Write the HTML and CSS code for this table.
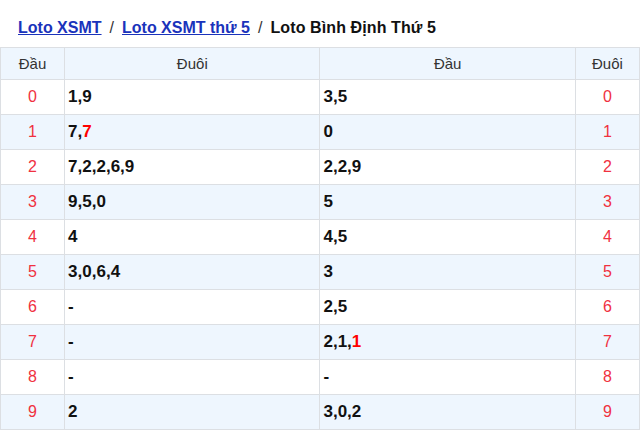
FILE: index.html
```html
<!DOCTYPE html>
<html lang="vi">
<head>
<meta charset="utf-8">
<link rel="stylesheet" href="styles.css">
</head>
<body>
<div class="crumbs">
  <a href="#">Loto XSMT</a><span class="sep">/</span><a href="#">Loto XSMT thứ 5</a><span class="sep">/</span><span class="cur">Loto Bình Định Thứ 5</span>
</div>
<table class="loto">
  <thead>
    <tr><th class="c1">Đầu</th><th class="c2">Đuôi</th><th class="c3">Đầu</th><th class="c4">Đuôi</th></tr>
  </thead>
  <tbody>
    <tr><td class="n">0</td><td class="v">1,9</td><td class="v">3,5</td><td class="n">0</td></tr>
    <tr><td class="n">1</td><td class="v">7,<span class="hl">7</span></td><td class="v">0</td><td class="n">1</td></tr>
    <tr><td class="n">2</td><td class="v">7,2,2,6,9</td><td class="v">2,2,9</td><td class="n">2</td></tr>
    <tr><td class="n">3</td><td class="v">9,5,0</td><td class="v">5</td><td class="n">3</td></tr>
    <tr><td class="n">4</td><td class="v">4</td><td class="v">4,5</td><td class="n">4</td></tr>
    <tr><td class="n">5</td><td class="v">3,0,6,4</td><td class="v">3</td><td class="n">5</td></tr>
    <tr><td class="n">6</td><td class="v">-</td><td class="v">2,5</td><td class="n">6</td></tr>
    <tr><td class="n">7</td><td class="v">-</td><td class="v">2,1,<span class="hl">1</span></td><td class="n">7</td></tr>
    <tr><td class="n">8</td><td class="v">-</td><td class="v">-</td><td class="n">8</td></tr>
    <tr><td class="n">9</td><td class="v">2</td><td class="v">3,0,2</td><td class="n">9</td></tr>
  </tbody>
</table>
</body>
</html>
```
FILE: styles.css
```css
html, body {
  margin: 0;
  padding: 0;
  background: #fff;
  font-family: "Liberation Sans", Arial, sans-serif;
}
.crumbs {
  height: 47px;
  box-sizing: border-box;
  padding: 19px 0 0 18px;
  font-size: 16px;
  font-weight: bold;
  line-height: 18px;
  color: #111;
}
.crumbs a {
  color: #1a33bb;
  text-decoration: underline;
}
.crumbs .sep {
  color: #333;
  font-weight: normal;
  margin: 0 8px 0 8px;
}
.crumbs .cur {
  letter-spacing: 0.1px;
}
.loto {
  width: 640px;
  border-collapse: collapse;
  table-layout: fixed;
}
.loto th, .loto td {
  border: 1px solid #dcdfe3;
  padding: 0 3px;
}
.loto th {
  height: 31px;
  font-weight: normal;
  font-size: 15px;
  color: #333;
  background: #eef6fe;
  text-align: center;
}
.loto .c1 { width: 57px; }
.loto .c2 { width: 248px; }
.loto .c3 { width: 248px; }
.loto .c4 { width: 57px; }
.loto td {
  height: 34px;
  font-size: 16px;
}
.loto tbody tr:nth-child(even) td { background: #eef6fe; }
.loto td.n {
  text-align: center;
  color: #f0313f;
}
.loto td.v {
  font-weight: bold;
  font-size: 17px;
  color: #111;
}
.loto .hl { color: #f00; }
```
